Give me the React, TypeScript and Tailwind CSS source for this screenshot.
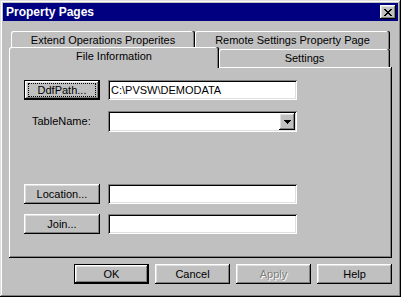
import React from "react";

const raised =
  "shadow-[inset_-1px_-1px_0_#000,inset_1px_1px_0_#fff,inset_-2px_-2px_0_#808080,inset_2px_2px_0_#dfdfdf]";
const defBtn =
  "shadow-[inset_0_0_0_1px_#000,inset_-2px_-2px_0_#000,inset_2px_2px_0_#fff,inset_-3px_-3px_0_#808080,inset_3px_3px_0_#dfdfdf]";
const sunken =
  "shadow-[inset_1px_1px_0_#808080,inset_-1px_-1px_0_#fff,inset_2px_2px_0_#000,inset_-2px_-2px_0_#dfdfdf]";
const tabShadow =
  "shadow-[inset_-1px_0_0_#000,inset_-2px_0_0_#808080,inset_1px_1px_0_#fff]";

function Tab({
  label,
  className,
}: {
  label: string;
  className: string;
}) {
  return (
    <div
      className={`flex justify-center pt-[3px] leading-[13px] rounded-tl-[2px] rounded-tr-[2px] bg-[#c0c0c0] ${tabShadow} ${className}`}
    >
      {label}
    </div>
  );
}

function Btn({
  label,
  def,
  focus,
  disabled,
  className,
}: {
  label: string;
  def?: boolean;
  focus?: boolean;
  disabled?: boolean;
  className: string;
}) {
  return (
    <div
      className={`flex items-center justify-center bg-[#c0c0c0] leading-[13px] ${def ? defBtn : raised} ${className}`}
    >
      {focus ? (
        <div className="flex-1 self-stretch m-[3px] mx-[4px] border border-dotted border-black flex items-center justify-center">
          {label}
        </div>
      ) : disabled ? (
        <span className="text-[#808080] [text-shadow:1px_1px_0_#fff]">{label}</span>
      ) : (
        <span>{label}</span>
      )}
    </div>
  );
}

function TextBox({ value }: { value?: string }) {
  return (
    <div
      className={`w-[189px] h-[20px] bg-white ${sunken} flex items-center pl-[3px] leading-[13px]`}
    >
      {value}
    </div>
  );
}

export default function App() {
  return (
    <div className="font-['Liberation_Sans',Arial,sans-serif] text-[11px] text-black">
      <div
        className={`w-[401px] h-[297px] bg-[#c0c0c0] p-[3px] flex flex-col shadow-[inset_-1px_-1px_0_#000,inset_1px_1px_0_#dfdfdf,inset_-2px_-2px_0_#808080,inset_2px_2px_0_#fff]`}
      >
        {/* Title bar */}
        <div className="h-[18px] bg-[#000080] flex items-center justify-between pl-[3px] pr-[2px]">
          <span className="text-white font-bold text-[12px] leading-[14px]">
            Property Pages
          </span>
          <div
            className={`w-[16px] h-[14px] bg-[#c0c0c0] ${raised} flex items-center justify-center`}
          >
            <svg width="8" height="7" viewBox="0 0 8 7" shapeRendering="crispEdges">
              <path
                d="M0 0h2v1H0zM6 0h2v1H6zM1 1h2v1H1zM5 1h2v1H5zM2 2h4v1H2zM3 3h2v1H3zM2 4h4v1H2zM1 5h2v1H1zM5 5h2v1H5zM0 6h2v1H0zM6 6h2v1H6z"
                fill="#000"
              />
            </svg>
          </div>
        </div>

        {/* Tabs + panel */}
        <div className="mt-[10px] ml-[6px] w-[383px] flex flex-col">
          <div className="flex pl-[2px] h-[18px]">
            <Tab label="Extend Operations Properites" className="w-[184px] h-[18px]" />
            <Tab label="Remote Settings Property Page" className="w-[195px] h-[18px]" />
          </div>
          <div className="flex items-start h-[20px] -mt-[2px]">
            <Tab
              label="File Information"
              className="w-[210px] h-[21px] relative z-10"
            />
            <Tab label="Settings" className="w-[171px] h-[18px] mt-[2px]" />
          </div>
          <div
            className={`h-[191px] bg-[#c0c0c0] shadow-[inset_-1px_-1px_0_#000,inset_1px_1px_0_#fff,inset_-2px_-2px_0_#808080] pt-[13px] pl-[15px] flex flex-col`}
          >
            <div className="flex items-center gap-[8px]">
              <Btn label="DdfPath..." def focus className="w-[76px] h-[20px]" />
              <TextBox value="C:\PVSW\DEMODATA" />
            </div>
            <div className="flex items-center mt-[11px]">
              <div className="w-[84px] pl-[8px] leading-[13px]">TableName:</div>
              <div
                className={`w-[189px] h-[21px] bg-white ${sunken} flex justify-end p-[2px]`}
              >
                <div
                  className={`w-[16px] h-[17px] bg-[#c0c0c0] ${raised} flex items-center justify-center`}
                >
                  <svg width="7" height="4" viewBox="0 0 7 4" shapeRendering="crispEdges">
                    <path d="M0 0h7v1H0zM1 1h5v1H1zM2 2h3v1H2zM3 3h1v1H3z" fill="#000" />
                  </svg>
                </div>
              </div>
            </div>
            <div className="flex items-center gap-[8px] mt-[52px]">
              <Btn label="Location..." className="w-[76px] h-[20px]" />
              <TextBox />
            </div>
            <div className="flex items-center gap-[8px] mt-[10px]">
              <Btn label="Join..." className="w-[76px] h-[20px]" />
              <TextBox />
            </div>
          </div>
          <div className="flex justify-end gap-[6px] mt-[6px]">
            <Btn label="OK" def className="w-[75px] h-[20px]" />
            <Btn label="Cancel" className="w-[75px] h-[20px]" />
            <Btn label="Apply" disabled className="w-[75px] h-[20px]" />
            <Btn label="Help" className="w-[75px] h-[20px]" />
          </div>
        </div>
      </div>
    </div>
  );
}
